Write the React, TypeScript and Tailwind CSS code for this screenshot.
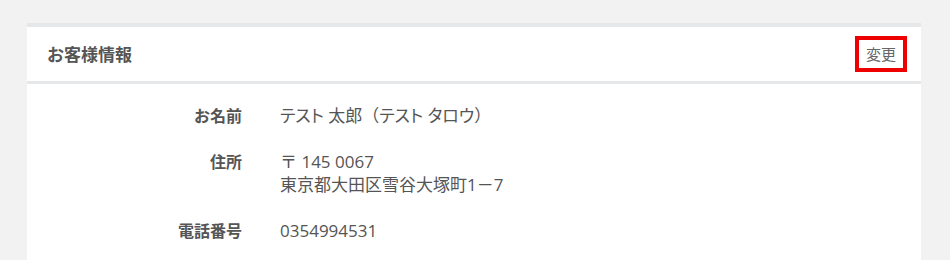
import React from "react";

export default function App() {
  const font = { fontFamily: '"Noto Sans CJK JP", "Noto Sans", sans-serif' };
  const valFont = { fontFamily: '"Open Sans", "Noto Sans CJK JP", sans-serif' };
  const palt = { fontFeatureSettings: '"palt"' };
  return (
    <div className="w-[950px] h-[260px] bg-[#f2f2f2] pt-[23px] px-[27px] overflow-hidden" style={font}>
      <div className="w-[894px] bg-white border-t-4 border-[#e6e7e9]">
        <div className="h-[54px] flex items-center justify-between pl-[20px] pr-[14px]">
          <div className="text-[17px] font-bold text-[#555]">お客様情報</div>
          <button className="w-[52px] h-[36px] border-4 border-[#ee0000] flex items-center justify-center text-[15px] text-[#666] bg-white">
            変更
          </button>
        </div>
        <div className="h-[3px] bg-[#e6e7e9]" />
        <div className="pt-[20px] flex flex-col gap-[22px] pb-[20px]">
          <div className="flex leading-[23.5px]">
            <div className="w-[215px] text-right font-bold text-[16px] text-[#555]">お名前</div>
            <div className="ml-[38px] text-[17px] text-[#555]" style={valFont}>
              <span style={palt}>テスト</span> 太郎（<span style={palt}>テスト</span> <span style={palt}>タロウ</span>）
            </div>
          </div>
          <div className="flex leading-[23.5px]">
            <div className="w-[215px] text-right font-bold text-[16px] text-[#555]">住所</div>
            <div className="ml-[38px] text-[17px] text-[#555]" style={valFont}>
              <div>〒 145 0067</div>
              <div>東京都大田区雪谷大塚町1－7</div>
            </div>
          </div>
          <div className="flex leading-[23.5px]">
            <div className="w-[215px] text-right font-bold text-[16px] text-[#555]">電話番号</div>
            <div className="ml-[38px] text-[17px] text-[#555]" style={valFont}>
              0354994531
            </div>
          </div>
        </div>
      </div>
    </div>
  );
}
